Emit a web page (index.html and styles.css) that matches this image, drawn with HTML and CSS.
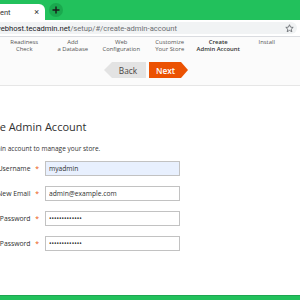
FILE: index.html
```html
<!DOCTYPE html>
<html>
<head>
<meta charset="utf-8">
<link rel="stylesheet" href="styles.css">
</head>
<body>
<div class="screen">
  <div class="tabbar">
    <div class="tab">
      <span class="tab-title">ent</span>
      <span class="tab-close">×</span>
    </div>
    <div class="newtab">
      <svg width="8" height="8" viewBox="0 0 8 8"><path d="M4 0.5v7M0.5 4h7" stroke="#1b1b1b" stroke-width="1.4"/></svg>
    </div>
  </div>
  <div class="addrbar">
    <div class="field">
      <span class="url"><span class="host">webhost.tecadmin.net</span><span class="path">/setup/#/create-admin-account</span></span>
      <svg class="star" width="9" height="9" viewBox="0 0 10 10"><path d="M5 0.8l1.2 2.7 2.9 0.3-2.2 1.9 0.7 2.9L5 7.1 2.4 8.6l0.7-2.9L0.9 3.8l2.9-0.3z" fill="none" stroke="#5f6368" stroke-width="0.9" stroke-linejoin="round"/></svg>
    </div>
  </div>
  <div class="page">
    <div class="header">
      <div class="steps">
        <div class="step">Readiness<br>Check</div>
        <div class="step">Add<br>a Database</div>
        <div class="step">Web<br>Configuration</div>
        <div class="step">Customize<br>Your Store</div>
        <div class="step active">Create<br>Admin Account</div>
        <div class="step">Install</div>
      </div>
      <div class="nav">
        <div class="btn back">Back</div>
        <div class="btn next">Next</div>
      </div>
    </div>
    <div class="content">
      <h1 class="title">Create Admin Account</h1>
      <p class="desc">Create a new Admin account to manage your store.</p>
      <div class="form">
        <div class="row">
          <label class="label">New Username <span class="req">*</span></label>
          <input class="input autofill" type="text" value="myadmin">
        </div>
        <div class="row">
          <label class="label">New Email <span class="req">*</span></label>
          <input class="input" type="text" value="admin@example.com">
        </div>
        <div class="row">
          <label class="label">New Password <span class="req">*</span></label>
          <input class="input" type="password" value="mypassword123">
        </div>
        <div class="row">
          <label class="label">Confirm Password <span class="req">*</span></label>
          <input class="input" type="password" value="mypassword123">
        </div>
      </div>
    </div>
  </div>
  <div class="bottombar"></div>
</div>
</body>
</html>
```

FILE: styles.css
```css
* { box-sizing: border-box; }
html, body { margin: 0; padding: 0; }
body { width: 300px; height: 300px; overflow: hidden; font-family: "Open Sans", "Noto Sans", sans-serif; background: #fff; }
.screen { width: 300px; height: 300px; display: flex; flex-direction: column; overflow: hidden; }

.tabbar { height: 20px; background: #22c15c; display: flex; align-items: flex-end; flex-shrink: 0; }
.tab { width: 45px; height: 16px; background: #fff; border-top-right-radius: 6px; display: flex; align-items: center; justify-content: space-between; padding: 0 6px 0 0; font-family: Roboto, "Noto Sans", sans-serif; font-size: 7.5px; color: #333; }
.tab-close { font-size: 9px; color: #333; line-height: 1; }
.newtab { width: 14px; height: 14px; border-radius: 50%; background: #1aa94e; display: flex; align-items: center; justify-content: center; margin: 0 0 1px 4px; align-self: center; }

.addrbar { height: 17px; background: #fff; padding: 2px 3px 2px 0; border-bottom: 1px solid #dadce0; flex-shrink: 0; }
.field { height: 12px; background: #f1f3f4; border-radius: 0 7px 7px 0; display: flex; align-items: center; justify-content: space-between; padding-right: 3px; overflow: hidden; }
.url { font-family: Roboto, "Noto Sans", sans-serif; font-size: 7.6px; margin-left: -5px; white-space: nowrap; }
.host { color: #202124; }
.path { color: #6b6e72; }

.page { flex: 1; display: flex; flex-direction: column; overflow: hidden; }
.header { background: #fbfbfb; border-bottom: 1px solid #e6e6e6; height: 49px; flex-shrink: 0; }
.steps { display: grid; grid-template-columns: repeat(6, 48.5px); padding-top: 2px; }
.step { text-align: center; font-size: 5.9px; line-height: 7px; color: #555; }
.step.active { color: #303030; font-weight: 600; }
.nav { display: flex; gap: 3px; padding: 9px 0 0 104px; }
.btn { height: 16px; display: flex; align-items: center; justify-content: center; font-size: 8.3px; }
.back { width: 42px; background: #e3e3e3; color: #4a4542; clip-path: polygon(8px 0, 100% 0, 100% 100%, 8px 100%, 0 50%); padding-left: 6px; }
.next { width: 39px; background: #eb5202; color: #fff; font-weight: 600; clip-path: polygon(0 0, calc(100% - 7px) 0, 100% 50%, calc(100% - 7px) 100%, 0 100%); padding-right: 6px; }

.content { flex: 1; padding-top: 34px; }
.title { margin: 0 0 0 -28px; font-size: 11px; font-weight: 400; color: #303030; line-height: 14px; white-space: nowrap; }
.desc { margin: 11px 0 0 -55px; font-size: 6.5px; color: #333; line-height: 8px; white-space: nowrap; }
.form { margin: 8px 0 0 -59px; display: flex; flex-direction: column; gap: 10px; }
.row { display: flex; align-items: center; gap: 4px; }
.label { width: 100px; text-align: right; font-size: 6.8px; color: #303030; padding-right: 2px; white-space: nowrap; }
.req { color: #eb5202; margin-left: 3px; }
.input { width: 135px; height: 15px; border: 1px solid #c2c2c2; background: #fff; font-family: "Open Sans", "Noto Sans", sans-serif; font-size: 6.7px; color: #303030; padding: 0 3px; margin: 0; outline: none; }
.autofill { background: #e8f0fe; }

.bottombar { height: 5px; background: #22c15c; border-top: 1px solid #1ea650; flex-shrink: 0; }
```
